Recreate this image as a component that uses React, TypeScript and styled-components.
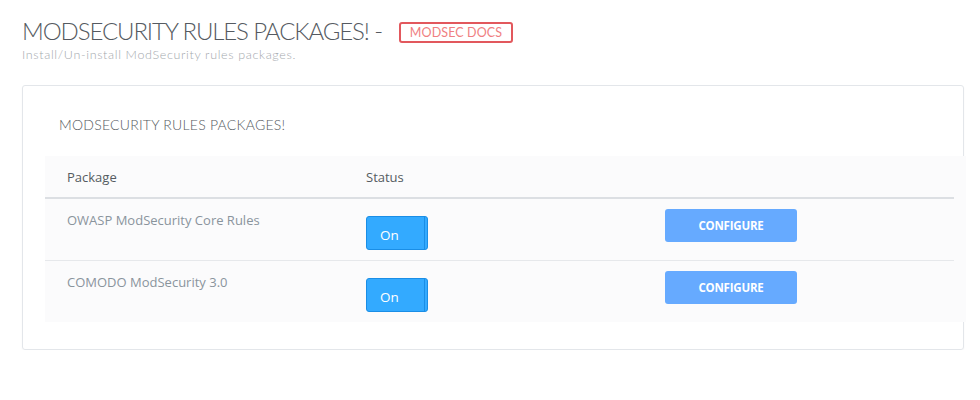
import styled, { createGlobalStyle } from 'styled-components';

const GlobalStyle = createGlobalStyle`
  body {
    margin: 0;
    background: #ffffff;
    font-family: "Open Sans", "Liberation Sans", sans-serif;
  }
`;

const packages = [
    { name: 'OWASP ModSecurity Core Rules', on: true },
    { name: 'COMODO ModSecurity 3.0', on: true },
];

const Page = styled.div`
  padding: 16px 16px 0 22px;
  width: 980px;
  box-sizing: border-box;
`;

const TitleRow = styled.div`
  display: flex;
  align-items: center;
  gap: 17px;
`;

const Title = styled.h1`
  margin: 0;
  font-family: "Lato", "Open Sans", sans-serif;
  font-weight: 300;
  font-size: 24px;
  line-height: 30px;
  color: #555a61;
  letter-spacing: -1.1px;
`;

const DocsBadge = styled.a`
  display: inline-flex;
  align-items: center;
  justify-content: center;
  width: 114px;
  height: 21px;
  box-sizing: border-box;
  border: 2px solid #e2585d;
  border-radius: 3px;
  color: #f07f82;
  font-family: "Lato", "Open Sans", sans-serif;
  font-size: 12.5px;
  letter-spacing: 0.1px;
  text-decoration: none;
  margin-top: 2px;
`;

const Subtitle = styled.p`
  margin: 1px 0 0;
  font-family: "Lato", "Open Sans", sans-serif;
  font-weight: 300;
  font-size: 12.5px;
  letter-spacing: 0.65px;
  color: #a4a8ad;
`;

const Card = styled.section`
  margin-top: 23px;
  width: 942px;
  height: 265px;
  box-sizing: border-box;
  border: 1px solid #e3e6ea;
  border-radius: 3px;
  box-shadow: 0 1px 2px rgba(0, 0, 0, 0.04);
  padding: 30px 0 0 22px;
`;

const CardTitle = styled.h2`
  margin: 0 0 0 14px;
  font-family: "Lato", "Open Sans", sans-serif;
  font-weight: 300;
  font-size: 14px;
  color: #555a60;
  letter-spacing: 0.25px;
`;

const TableWrap = styled.div`
  margin-top: 23px;
  width: 921px;
  background: #fbfbfc;
  padding-right: 12px;
  box-sizing: border-box;
`;

const Row = styled.div<{ $head?: boolean }>`
  display: grid;
  grid-template-columns: 321px 299px 1fr;
  height: ${(p) => (p.$head ? '43px' : '62px')};
  border-bottom: ${(p) => (p.$head ? '2px solid #dcdfe3' : '1px solid #e6e8eb')};
  box-sizing: border-box;
  &:last-child {
    border-bottom: none;
    height: 61px;
  }
`;

const Cell = styled.div<{ $first?: boolean; $head?: boolean }>`
  padding-left: ${(p) => (p.$first ? '22px' : '0')};
  padding-top: 12px;
  font-size: 13px;
  color: ${(p) => (p.$head ? '#555b61' : '#8a949c')};
`;

const ToggleCell = styled.div`
  padding-top: 17px;
`;

const Toggle = styled.button`
  position: relative;
  width: 62px;
  height: 34px;
  box-sizing: border-box;
  background: #33aaff;
  border: 1px solid #1a8ee6;
  border-radius: 3px;
  color: #ffffff;
  font-family: "Open Sans", sans-serif;
  font-size: 13.5px;
  text-align: left;
  padding: 4px 0 0 13px;
  cursor: pointer;

  &::after {
    content: '';
    position: absolute;
    top: 0;
    bottom: 0;
    right: 2px;
    width: 1px;
    background: #1a8ee6;
  }
`;

const ActionCell = styled.div`
  padding-top: 10px;
`;

const ConfigureButton = styled.button`
  width: 132px;
  height: 33px;
  background: #66aaff;
  border: none;
  border-radius: 3px;
  color: #ffffff;
  font-family: "Open Sans", sans-serif;
  font-weight: 700;
  font-size: 11.5px;
  letter-spacing: -0.2px;
  cursor: pointer;
`;

export default function App() {
    return (
        <>
            <GlobalStyle />
            <Page>
                <TitleRow>
                    <Title>MODSECURITY RULES PACKAGES! -</Title>
                    <DocsBadge href="#">MODSEC DOCS</DocsBadge>
                </TitleRow>
                <Subtitle>Install/Un-install ModSecurity rules packages.</Subtitle>
                <Card>
                    <CardTitle>MODSECURITY RULES PACKAGES!</CardTitle>
                    <TableWrap>
                        <Row $head>
                            <Cell $first $head>Package</Cell>
                            <Cell $head>Status</Cell>
                            <Cell $head />
                        </Row>
                        {packages.map((pkg) => (
                            <Row key={pkg.name}>
                                <Cell $first>{pkg.name}</Cell>
                                <ToggleCell>
                                    <Toggle>{pkg.on ? 'On' : 'Off'}</Toggle>
                                </ToggleCell>
                                <ActionCell>
                                    <ConfigureButton>CONFIGURE</ConfigureButton>
                                </ActionCell>
                            </Row>
                        ))}
                    </TableWrap>
                </Card>
            </Page>
        </>
    );
}
